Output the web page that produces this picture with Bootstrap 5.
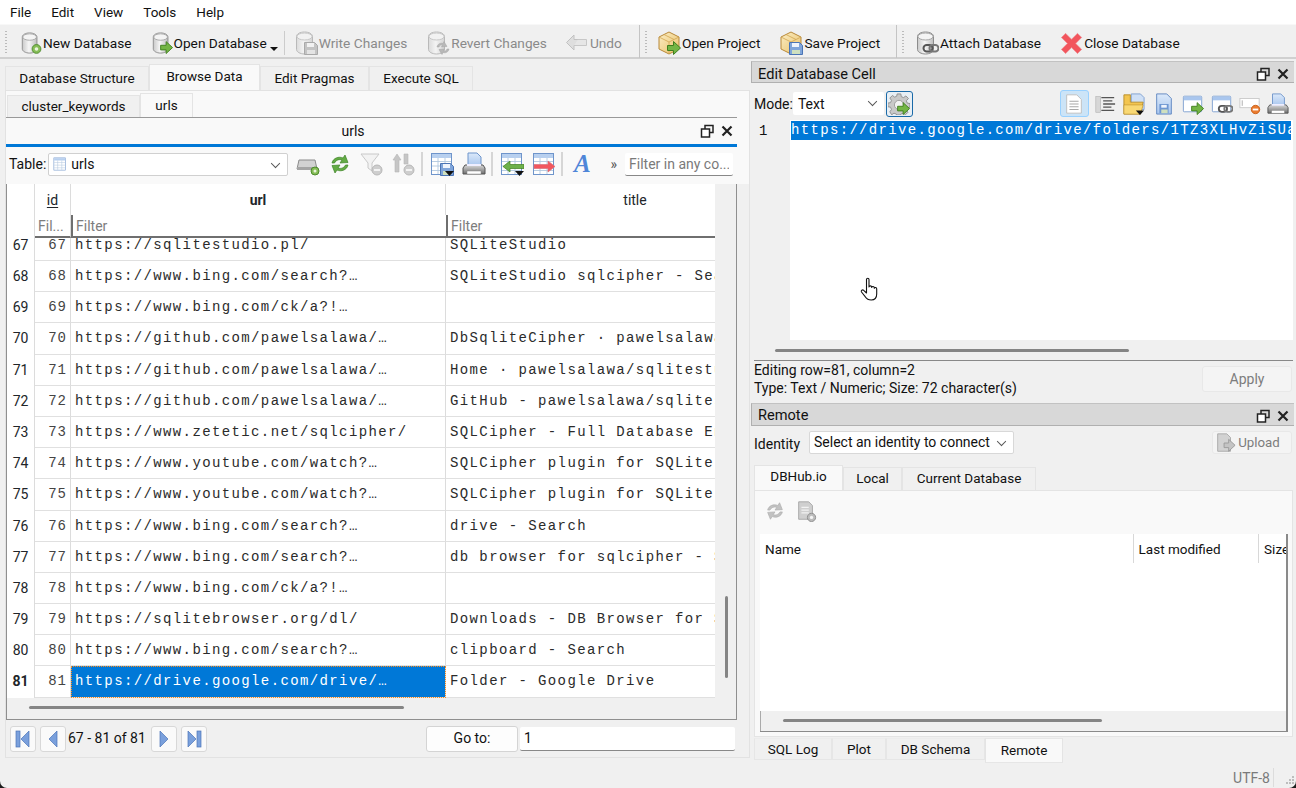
<!DOCTYPE html>
<html lang="en">
<head>
  <meta charset="UTF-8" />
  <meta name="viewport" content="width=device-width, initial-scale=1.0"/>
  <title>DB Browser for SQLite</title>
  <link href="https://cdn.jsdelivr.net/npm/bootstrap@5.3.0/dist/css/bootstrap.min.css" rel="stylesheet">
  <style>
    html, body { height: 100%; margin: 0; background: #1c1c1c; overflow: hidden; }
    body { font-family: Roboto, "Liberation Sans", sans-serif; font-size: 14px; color: #111; }
    .app-win { width: 1296px; height: 788px; background: #f0f0f0; border-radius: 0 0 7px 7px; overflow: hidden; position: relative; }
    .svg-defs { position: absolute; width: 0; height: 0; }
    .ico { width: 24px; height: 24px; flex: none; display: block; }
    .ico-off { filter: grayscale(1) opacity(.55); }
    .ico-db { width: 22px; }

    .menu-strip { height: 24px; background: #fff; padding-left: 10px; gap: 20px; line-height: 24px; font-size: 13.5px; }
    .tool-strip { height: 35px; border-top: 1px solid #f8f8f8; border-bottom: 2px solid #d0d0d0; font-size: 13.7px; }
    .tool-block { height: 33px; gap: 19px; padding: 3px 0 0 20px; position: relative; flex: none; }
    .tool-block::before { content: ""; position: absolute; left: 5px; top: 6px; bottom: 4px; width: 2px; background: repeating-linear-gradient(#bbb 0 1px, transparent 1px 3px); }
    .tool-one { width: 640px; border-right: 1px solid #c4c4c4; }
    .tool-two { width: 257px; padding-left: 17px; border-right: 1px solid #c4c4c4; }
    .tool-three { padding-left: 18px; gap: 20px; }
    .tool-btn { gap: 1px; white-space: nowrap; }
    .tool-off { color: #8a8a8a; }
    .undo-btn { margin-left: -1px; }
    .tool-caret { width: 0; height: 0; border: 4px solid transparent; border-top-color: #111; border-bottom: 0; margin: 12px 0 0 2px; }
    .tool-line { width: 1px; height: 24px; background: #ccc; margin: 0 -10px 0 -13px; }

    .work-area { height: 709px; }
    .left-side { width: 751px; padding: 5px 0 0 5px; flex: none; }
    .right-side { width: 545px; flex: none; padding-top: 2px; }

    .qt-tabs { border: 0; flex-wrap: nowrap; align-items: flex-end; font-size: 13.5px; }
    .qt-tabs .nav-link { border: 1px solid #e4e4e4; border-bottom: 0; border-radius: 0; background: #f0f0f0; color: #111; padding: 0; height: 24px; line-height: 23px; text-align: center; margin: 0; }
    .qt-tabs .nav-link.active { background: #f9f9f9; height: 26px; line-height: 22px; color: #111; border-color: #e4e4e4; }

    .left-pane { height: 668px; width: 745px; background: #f0f0f0; border: 1px solid #e2e2e2; }
    .pane-top { background: #f9f9f9; padding: 2px 0 0 0; }
    .sub-tabs { border-bottom: 1px solid #999; width: 731px; margin-left: 0; padding-left: 1px; }
    .sub-tabs .nav-link { height: 22px; line-height: 20px; }
    .sub-tabs .nav-link.active { height: 24px; line-height: 22px; }
    .dock-head { height: 26px; width: 731px; line-height: 26px; }
    .dock-name { width: 694px; text-align: center; }
    .dock-ctl { gap: 6px; align-items: center; }
    .ctl-mark { width: 14px; height: 14px; display: block; }
    .blue-rule { width: 731px; height: 3px; background: #0078d7; }
    .tbl-tools { height: 37px; width: 731px; padding: 0 0 3px 3px; }
    .tbl-tools .ico { margin-right: 8px; }
    .tool-sep { width: 2px; height: 24px; background: #d6d6d6; margin: 0 7px 0 -3px; flex: none; }
    .tbl-label { margin-right: 2px; }
    .table-mark { width: 14px; height: 14px; margin-right: 4px; }
    .italic-a { width: 24px; margin-right: -3px; text-align: center; font: italic 700 25px "Liberation Serif", serif; color: #4f86d8; line-height: 24px; }
    .qt-select { height: 23px; border: 1px solid #d0d0d0; border-radius: 2px; background: #fff; padding: 0 0 0 4px; line-height: 21px; position: relative; flex: none; white-space: nowrap; }
    .qt-select::after { content: ""; position: absolute; right: 8px; top: 6px; width: 7px; height: 7px; border-right: 1px solid #555; border-bottom: 1px solid #555; transform: rotate(45deg) scale(.95); }
    .qt-input { border: 0; border-bottom: 1px solid #888; border-radius: 2px; background: #fff; height: 23px; padding: 0 4px; font-size: 14px; color: #111; box-shadow: none; }
    .qt-input::placeholder { color: #7a7a7a; opacity: 1; }

    .data-box { width: 731px; height: 536px; border: 1px solid #8f8f8f; border-top: 0; background: #f0f0f0; }
    .data-main { height: 514px; }
    .data-left { width: 708px; flex: none; background: #fff; overflow: hidden; }
    .data-tbl { table-layout: fixed; width: 817px; margin: 0; border-collapse: separate; border-spacing: 0; background: #fff; }
    .data-tbl td, .data-tbl th { padding: 0; border: 0; border-bottom: 1px solid #e0e0e0; border-right: 1px solid #dcdcdc; background: #fff; box-shadow: none; white-space: nowrap; overflow: hidden; }
    .data-tbl .head-row th { height: 31px; padding-top: 2px; text-align: center; font-weight: 400; border-bottom: 0; line-height: 29px; }
    .data-tbl .head-row th.url-col { font-weight: 700; }
    .data-tbl .head-row th.end-col { border-right: 0; }
    .data-tbl .head-row u { text-underline-offset: 2px; }
    .data-tbl .filter-row th { height: 23px; padding-top: 1px; border-bottom: 2px solid #6f6f6f; font-weight: 400; line-height: 20px; color: #7d7d7d; }
    .data-tbl .filter-row th.fil-cell { padding-left: 3px; border-right: 0; border-left: 2px solid #6f6f6f; }
    .data-tbl .filter-row th.fil-id { padding-left: 3px; }
    .data-tbl .filter-row th.fil-none { border-bottom: 0; }
    .data-tbl .row-num { text-align: center; border-bottom: 0; border-right: 1px solid #dcdcdc; }
    .data-tbl tr.body-row td { height: 31.2px; line-height: 30px; }
    .data-tbl td.end-col { border-right: 0; }
    .mono-cell { font-family: "Liberation Mono", "Courier New", monospace; font-size: 14px; letter-spacing: 1.38px; color: #2b2b2b; padding-left: 4px !important; }
    .id-cell { text-align: right; padding-right: 3px !important; padding-left: 0 !important; letter-spacing: 1px; color: #444; }
    .cut-box { height: 22px; overflow: hidden; }
    .cut-box span { display: block; line-height: 30px; margin-top: -8px; }
    .data-tbl td.pick-cell { background: #0078d7; color: #fff; outline: 1px dotted #ff8c1a; outline-offset: -1px; }
    .side-scroll { flex: 1; position: relative; background: #f0f0f0; }
    .side-thumb { position: absolute; left: 10px; top: 412px; width: 3px; height: 82px; background: #858585; border-radius: 2px; }
    .base-scroll { height: 21px; padding: 8px 0 0 22px; }
    .base-thumb { height: 3px; background: #858585; border-radius: 2px; }

    .pager-row { height: 37px; width: 731px; padding-left: 4px; }
    .pager-btn { width: 26px; height: 26px; border: 1px solid #d8d8d8; border-radius: 3px; background: #fafafa; padding: 0; flex: none; }
    .pager-btn svg { width: 20px; height: 20px; display: block; margin: 2px; }
    .pager-text { margin: 0 5px 0 2px; }
    .goto-btn { width: 92px; height: 26px; border: 1px solid #d4d4d4; border-radius: 3px; background: #fdfdfd; font-size: 14px; padding: 0; color: #111; }
    .goto-input { width: 215px; height: 24px; margin: 0 2px 0 2px; }

    .dock-title { height: 22px; width: 543px; background: #d8d8d8; border: 1px solid #b0b0b0; border-top: 1px solid #c2c2c2; border-right: 0; padding: 4px 4px 0 6px; line-height: 16px; font-size: 14.6px; }
    .dock-low { height: 23px; padding-top: 2px; line-height: 19px; }
    .mode-row { height: 37px; padding: 7px 0 0 3px; align-items: flex-start !important; }
    .mode-row > span { line-height: 28px; }
    .mode-select { width: 91px; margin-top: 2px; border: 0; padding-left: 5px; line-height: 24px; }
    .gear-btn { width: 27px; height: 26px; border: 1px solid #1a6aa8; border-radius: 3px; background: #e8eff5; margin: 1px 0 0 2px; }
    .doc-btn { width: 29px; height: 27px; background: #cce4f7; border: 1px solid #99d1ff; border-radius: 3px; margin-left: 147px; }
    .cell-tools .ico { width: 22px; height: 22px; }
    .cell-tools > .ico { margin-top: 3px; }
    .edit-area { height: 220px; width: 539px; margin-left: 3px; background: #fff; }
    .gutter { width: 36px; background: #f0f0f0; padding: 1px 0 0 5px; line-height: 20px; flex: none; font-family: "Liberation Mono", monospace; }
    .edit-text { font-family: "Liberation Mono", "Courier New", monospace; font-size: 14px; letter-spacing: 1.33px; background: #0078d7; color: #fff; height: 19px; line-height: 18px; width: 500px; margin: 1px 0 0 1px; overflow: hidden; white-space: nowrap; }
    .edit-base { height: 21px; width: 539px; margin-left: 3px; border-bottom: 1px solid #888; padding: 9px 0 0 21px; }
    .stat-row { height: 42px; padding: 0 4px 0 3px; }
    .stat-text { line-height: 18px; }
    .off-btn { border: 1px solid #e8e8e8; border-radius: 3px; background: #f4f4f4; color: #7d7d7d; font-size: 14px; padding: 0; }
    .apply-btn { width: 90px; height: 26px; margin-top: 5px; }
    .ident-row { height: 39px; padding: 5px 4px 0 3px; align-items: flex-start !important; }
    .ident-label { line-height: 24px; margin: 1px 9px 0 0; }
    .ident-select { width: 205px; padding-right: 24px; border-color: #d8d8d8; }
    .upload-btn { width: 80px; height: 23px; gap: 2px; font-size: 13.3px; padding-right: 10px; }
    .upload-btn svg { width: 22px; height: 22px; }
    .rem-tabs { padding-left: 3px; height: 25px; }
    .rem-tabs .nav-link { height: 23px; line-height: 20px; }
    .rem-tabs .nav-link.active { height: 25px; line-height: 21px; }
    .rem-pane { height: 247px; width: 539px; margin-left: 3px; background: #f9f9f9; border: 1px solid #e4e4e4; padding: 9px 5px 0 5px; }
    .rem-icons { height: 34px; padding-left: 4px; gap: 9px; }
    .rem-icons .ico { width: 22px; height: 22px; }
    .rem-table { height: 198px; width: 528px; background: #fff; border-right: 2px solid #8a8a8a; border-bottom: 1px solid #8a8a8a; overflow: hidden; }
    .rem-head { height: 29px; font-size: 13.5px; }
    .rem-head > div { padding: 1px 0 0 5px; line-height: 28px; white-space: nowrap; overflow: hidden; }
    .rem-head .head-cell { border-right: 1px solid #d8d8d8; }
    .rem-body { height: 148px; }
    .rem-base { height: 20px; background: #f0f0f0; padding: 8px 0 0 22px; border-left: 1px solid #aaa; }
    .low-tabs { padding: 1px 0 0 3px; }
    .low-tabs .nav-link { height: 22px; line-height: 20px; border: 1px solid #e6e6e6; border-top: 1px solid #ececec; }
    .low-tabs .nav-link.active { height: 25px; line-height: 23px; border-top: 1px solid #e6e6e6; border-bottom: 1px solid #e6e6e6; }
    .qt-tabs.low-tabs { align-items: flex-start; }

    .status-strip { height: 20px; padding-right: 22px; color: #7a7a7a; line-height: 20px; position: relative; }
    .status-sep { width: 1px; height: 19px; background: #dcdcdc; margin-left: 3px; }
    .grip-mark { position: absolute; right: 1px; bottom: 1px; width: 12px; height: 12px; }
    .hand-cur { position: absolute; left: 860px; top: 277px; width: 20px; height: 25px; }
  </style>
</head>
<body>
  <svg class="svg-defs" xmlns="http://www.w3.org/2000/svg">
    <defs>
      <linearGradient id="gDb" x1="0" x2="1" y1="0" y2="0"><stop offset="0" stop-color="#c9c9c9"/><stop offset=".45" stop-color="#f6f6f6"/><stop offset="1" stop-color="#bdbdbd"/></linearGradient>
      <linearGradient id="gBlue" x1="0" x2="0" y1="0" y2="1"><stop offset="0" stop-color="#dbe9fa"/><stop offset="1" stop-color="#a9c6ee"/></linearGradient>
      <linearGradient id="gBox" x1="0" x2="1" y1="0" y2="1"><stop offset="0" stop-color="#fbeec6"/><stop offset="1" stop-color="#e9c067"/></linearGradient>
      <linearGradient id="gPrint" x1="0" x2="0" y1="0" y2="1"><stop offset="0" stop-color="#d9d9d9"/><stop offset="1" stop-color="#6d6d6d"/></linearGradient>
    </defs>
    <symbol id="p-db" viewBox="0 0 24 24"><path d="M2.500 5.500c0-2.600 3.600-4.500 8-4.500s8 1.900 8 4.500v13c0 2.400-3.600 4.500-8 4.500s-8-2.100-8-4.500z" fill="url(#gDb)" stroke="#8c8c8c"/><ellipse cx="10.500" cy="5.500" rx="7.500" ry="3.500" fill="#f4f4f4" stroke="#a5a5a5"/></symbol>
    <symbol id="p-plus" viewBox="0 0 24 24"><circle cx="18" cy="18.500" r="4.800" fill="#86bd57" stroke="#4d8b2c"/><circle cx="18" cy="18.500" r="2" fill="#eaf5dd"/></symbol>
    <symbol id="p-arrow" viewBox="0 0 24 24"><path d="M10.500 14.500h6v-4l7 6.500-7 6.500v-4h-6z" fill="#73b544" stroke="#3f7f1e"/></symbol>
    <symbol id="p-floppy" viewBox="0 0 24 24"><path d="M10.500 11.500h10l3 3v9h-13z" fill="#7fa5da" stroke="#4a74b5"/><rect x="13" y="12" width="7" height="4" fill="#eef4fc"/><rect x="13" y="19" width="8" height="4" fill="#cfe0bf"/></symbol>
    <symbol id="p-cycle" viewBox="0 0 24 24"><path d="M11 16c.5-3 3.500-4.500 6-3.500l1-2 3 5-5.500.5 1-2c-1.500-.5-3 .3-3.500 2zM23 18c-.5 3-3.500 4.500-6 3.500l-1 2-3-5 5.500-.5-1 2c1.500.5 3-.3 3.500-2z" fill="#8a8a8a" stroke="#666" stroke-width=".5"/></symbol>
    <symbol id="p-chain" viewBox="0 0 24 24"><rect x="8.500" y="14" width="9" height="6.500" rx="3.200" fill="none" stroke="#555" stroke-width="2"/><rect x="14.500" y="14" width="9" height="6.500" rx="3.200" fill="none" stroke="#777" stroke-width="2"/></symbol>
    <symbol id="p-box" viewBox="0 0 24 24"><path d="M12 1l10 5v12l-10 5-10-5V6z" fill="url(#gBox)" stroke="#b8893a"/><path d="M2 6l10 5 10-5M12 11v12M7 3.500l10 5" fill="none" stroke="#d0a550" stroke-width=".8"/></symbol>
    <symbol id="p-cross" viewBox="0 0 24 24"><path d="M5 1.500l6.500 6.500 6.500-6.500 4.500 4.500-6.500 6.500 6.500 6.500-4.500 4.500-6.500-6.500-6.500 6.500-4.500-4.500 6.500-6.500-6.500-6.500z" fill="#f2555d" stroke="#ef8a8e"/></symbol>
    <symbol id="p-undo" viewBox="0 0 24 24"><path d="M9 4L1.500 11.500 9 19v-4.500h6V8.500H9z" fill="#cfcfcf" stroke="#9b9b9b"/><path d="M13 8.500h8.500v6H9" fill="#dedede" stroke="#a5a5a5"/></symbol>
    <symbol id="p-addtbl" viewBox="0 0 24 24"><path d="M3 8h16l2 9H1z" fill="#d2d2d2" stroke="#8a8a8a"/><rect x="1" y="15" width="20" height="3" fill="#a5a5a5"/><circle cx="19" cy="19" r="4" fill="#86bd57" stroke="#4d8b2c"/><circle cx="19" cy="19" r="1.500" fill="#eaf5dd"/></symbol>
    <symbol id="p-refresh" viewBox="0 0 24 24"><path d="M4 11c1-5 7-7 11-5l2-3 3 7.500-8 .5 2-3c-3-1-6 0-7.500 3zM20 13c-1 5-7 7-11 5l-2 3-3-7.500 8-.5-2 3c3 1 6 0 7.500-3z" fill="#63ab44" stroke="#3d8427" stroke-width=".7"/></symbol>
    <symbol id="p-funnel" viewBox="0 0 24 24"><path d="M1 2h18l-7 9v8l-4-3v-5z" fill="#ededed" stroke="#a0a0a0"/><circle cx="17" cy="18" r="5" fill="#aaa" stroke="#808080"/><rect x="14" y="17" width="6" height="2" fill="#eee"/></symbol>
    <symbol id="p-sortoff" viewBox="0 0 24 24"><path d="M5 2l4 6H7v12H3V8H1z" fill="#9d9d9d" stroke="#7d7d7d" stroke-width=".6"/><path d="M12 2h4v10h-4z" fill="#9d9d9d" stroke="#7d7d7d" stroke-width=".6"/><circle cx="17" cy="18" r="5" fill="#aaa" stroke="#808080"/><rect x="14" y="17" width="6" height="2" fill="#eee"/></symbol>
    <symbol id="p-grid" viewBox="0 0 24 24"><rect x="1.500" y="1.500" width="20" height="21" fill="#fff" stroke="#6f95cb"/><rect x="2" y="2" width="19" height="4" fill="#b8d0ef"/><path d="M2 9.500h19M2 14h19M2 18.500h19M8 6v16M15 6v16" stroke="#b2c8df" stroke-width=".9"/></symbol>
    <symbol id="p-caret" viewBox="0 0 24 24"><path d="M15 19h9l-4.500 5z" fill="#111"/></symbol>
    <symbol id="p-green-left" viewBox="0 0 24 24"><path d="M24 12.500H10V9L3 14.500 10 20v-3.500h14z" fill="#6db14a" stroke="#3f7f1e" stroke-width=".7"/></symbol>
    <symbol id="p-red-right" viewBox="0 0 24 24"><path d="M2 12.500h14V9l7 5.500-7 5.500v-3.500H2z" fill="#f2575e" stroke="#d8737a" stroke-width=".7"/></symbol>
    <symbol id="p-print" viewBox="0 0 24 24"><path d="M6 1h9l4 4v9H6z" fill="url(#gBlue)" stroke="#6f95cb"/><path d="M3 13h18l2 3v6H1v-6z" fill="url(#gPrint)" stroke="#555"/><rect x="5" y="12" width="14" height="2" fill="#eef"/><rect x="5" y="19" width="14" height="3" fill="#fff" stroke="#888" stroke-width=".5"/></symbol>
    <symbol id="p-doc" viewBox="0 0 24 24"><path d="M4 2h11l5 5v15H4z" fill="#fff" stroke="#bdbdbd"/><path d="M7 9h10M7 12h10M7 15h10M7 18h10" stroke="#a8a8a8" stroke-width="1.300"/></symbol>
    <symbol id="p-docgrey" viewBox="0 0 24 24"><path d="M4 2h11l4 4v15H4z" fill="#cfcfcf" stroke="#a5a5a5"/><path d="M7 8h8M7 11h8M7 14h8" stroke="#f2f2f2" stroke-width="1.200"/><circle cx="18" cy="19" r="4.500" fill="#bcbcbc" stroke="#8d8d8d"/><circle cx="18" cy="19" r="1.800" fill="#f4f4f4"/></symbol>
    <symbol id="p-indent" viewBox="0 0 24 24"><rect x="2" y="4" width="5" height="17" fill="#d7d7d7" stroke="#aaa" stroke-width=".6"/><path d="M8 5h14M10 8.500h10M10 12h13M10 15.500h9M8 19h14" stroke="#555" stroke-width="1.400"/></symbol>
    <symbol id="p-folder" viewBox="0 0 24 24"><path d="M9 1h10l4 4v13H9z" fill="#cfe0f6" stroke="#7d9fd0"/><path d="M1 2h7v8h14l-3 13H1z" fill="#f3c54f" stroke="#b88c28"/><path d="M1 13h21l-3 10H1z" fill="#f9d873" stroke="#b88c28" stroke-width=".6"/><path d="M14 19h9l-4.500 5z" fill="#111"/></symbol>
    <symbol id="p-savedoc" viewBox="0 0 24 24"><path d="M4 1h11l5 5v17H4z" fill="url(#gBlue)" stroke="#5d84bf"/><path d="M7 12h10v10H7z" fill="#6d97d3"/><rect x="9" y="13" width="6" height="3" fill="#eef4fc"/><rect x="9" y="18" width="7" height="4" fill="#cfe0bf"/></symbol>
    <symbol id="p-window" viewBox="0 0 24 24"><rect x="1.500" y="3.500" width="20" height="17" rx="1" fill="#fff" stroke="#7d9fd0"/><rect x="2" y="4" width="19" height="4" fill="#a9c6ee"/></symbol>
    <symbol id="p-null" viewBox="0 0 24 24"><rect x="1" y="6" width="21" height="10" fill="#fff" stroke="#c9c9c9"/><rect x="3" y="8" width="1" height="6" fill="#aaa"/><circle cx="18" cy="18" r="4.600" fill="#ea7b2e" stroke="#c85f18"/><rect x="15" y="17" width="6" height="2" fill="#fff"/></symbol>
    <symbol id="p-gear" viewBox="0 0 24 24"><path d="M10 1h4l.5 3 2.500 1 2.500-1.800 2.800 2.800L20 8.500l1 2.500 3 .5v4l-3 .5-1 2.500 1.800 2.500-2.800 2.800-2.500-1.800-2.500 1-.5 1h-4l-.5-1-2.500-1-2.500 1.800L2 20.500 3.800 18l-1-2.500-3-.5v-4l3-.5 1-2.500L2 5.500 4.800 2.700 7.300 4.500l2.200-1z" fill="#c9c9c9" stroke="#8d8d8d"/><circle cx="12" cy="13" r="5" fill="#f2f2f2" stroke="#999"/></symbol>
    <symbol id="p-first" viewBox="0 0 20 20"><rect x="3" y="2" width="4" height="16" fill="#7aa0dc" stroke="#4c74b8" stroke-width=".7"/><path d="M16 2v16L8 10z" fill="#7aa0dc" stroke="#4c74b8" stroke-width=".7"/></symbol>
    <symbol id="p-prev" viewBox="0 0 20 20"><path d="M14 2v16L6 10z" fill="#7aa0dc" stroke="#4c74b8" stroke-width=".7"/></symbol>
    <symbol id="p-next" viewBox="0 0 20 20"><path d="M6 2v16l8-8z" fill="#7aa0dc" stroke="#4c74b8" stroke-width=".7"/></symbol>
    <symbol id="p-last" viewBox="0 0 20 20"><path d="M4 2v16l8-8z" fill="#7aa0dc" stroke="#4c74b8" stroke-width=".7"/><rect x="13" y="2" width="4" height="16" fill="#7aa0dc" stroke="#4c74b8" stroke-width=".7"/></symbol>
    <symbol id="p-float" viewBox="0 0 14 14"><rect x="5" y="1.500" width="8" height="7" fill="none" stroke="#222" stroke-width="1.500"/><rect x="1.500" y="5" width="8" height="8" fill="#fff" stroke="#222" stroke-width="1.500"/></symbol>
    <symbol id="p-close" viewBox="0 0 14 14"><path d="M2.500 2.500l9 9M11.500 2.500l-9 9" stroke="#222" stroke-width="2.200"/></symbol>
    <symbol id="p-upload" viewBox="0 0 24 24"><path d="M4 2h10l4 4v15H4z" fill="#d2d2d2" stroke="#aaa"/><path d="M11 12h5V8l7 6.500-7 6.500v-4h-5z" fill="#c4c4c4" stroke="#999"/></symbol>
  </svg>

  <div class="app-win d-flex flex-column">
    <div class="menu-strip d-flex">
      <span>File</span><span>Edit</span><span>View</span><span>Tools</span><span>Help</span>
    </div>

    <div class="tool-strip d-flex">
      <div class="tool-block tool-one d-flex align-items-center">
        <div class="tool-btn d-flex align-items-center"><svg class="ico ico-db"><use href="#p-db"/><use href="#p-plus"/></svg>New Database</div>
        <div class="tool-btn d-flex align-items-center"><svg class="ico ico-db"><use href="#p-db"/><use href="#p-arrow"/></svg>Open Database<span class="tool-caret"></span></div>
        <span class="tool-line"></span>
        <div class="tool-btn tool-off d-flex align-items-center"><svg class="ico ico-off"><use href="#p-db"/><use href="#p-floppy"/></svg>Write Changes</div>
        <div class="tool-btn tool-off d-flex align-items-center"><svg class="ico ico-off"><use href="#p-db"/><use href="#p-cycle"/></svg>Revert Changes</div>
        <div class="tool-btn tool-off undo-btn d-flex align-items-center"><svg class="ico ico-off"><use href="#p-undo"/></svg>Undo</div>
      </div>
      <div class="tool-block tool-two d-flex align-items-center">
        <div class="tool-btn d-flex align-items-center"><svg class="ico"><use href="#p-box"/><use href="#p-arrow"/></svg>Open Project</div>
        <div class="tool-btn d-flex align-items-center"><svg class="ico"><use href="#p-box"/><use href="#p-floppy"/></svg>Save Project</div>
      </div>
      <div class="tool-block tool-three d-flex align-items-center">
        <div class="tool-btn d-flex align-items-center"><svg class="ico"><use href="#p-db"/><use href="#p-chain"/></svg>Attach Database</div>
        <div class="tool-btn d-flex align-items-center"><svg class="ico ico-db"><use href="#p-cross"/></svg>Close Database</div>
      </div>
    </div>

    <div class="work-area d-flex">
      <div class="left-side">
        <ul class="nav qt-tabs">
          <li class="nav-item"><a class="nav-link" style="width:144px" href="#">Database Structure</a></li>
          <li class="nav-item"><a class="nav-link active" style="width:111px" href="#">Browse Data</a></li>
          <li class="nav-item"><a class="nav-link" style="width:109px" href="#">Edit Pragmas</a></li>
          <li class="nav-item"><a class="nav-link" style="width:104px" href="#">Execute SQL</a></li>
        </ul>
        <div class="left-pane">
          <div class="pane-top">
            <ul class="nav qt-tabs sub-tabs">
              <li class="nav-item"><a class="nav-link" style="width:133px" href="#">cluster_keywords</a></li>
              <li class="nav-item"><a class="nav-link active" style="width:53px" href="#">urls</a></li>
            </ul>
            <div class="dock-head d-flex">
              <div class="dock-name">urls</div>
              <div class="dock-ctl d-flex">
                <svg class="ctl-mark"><use href="#p-float"/></svg>
                <svg class="ctl-mark"><use href="#p-close"/></svg>
              </div>
            </div>
            <div class="blue-rule"></div>
            <div class="tbl-tools d-flex align-items-center">
              <span class="tbl-label">Table:</span>
              <div class="qt-select d-flex align-items-center" style="width:240px"><svg class="table-mark"><use href="#p-grid"/></svg>urls</div>
              <svg class="ico ms-2"><use href="#p-addtbl"/></svg>
              <svg class="ico"><use href="#p-refresh"/></svg>
              <svg class="ico ico-off"><use href="#p-funnel"/></svg>
              <svg class="ico ico-off"><use href="#p-sortoff"/></svg>
              <span class="tool-sep"></span>
              <svg class="ico"><use href="#p-grid"/><use href="#p-floppy"/><use href="#p-caret"/></svg>
              <svg class="ico"><use href="#p-print"/></svg>
              <span class="tool-sep"></span>
              <svg class="ico"><use href="#p-grid"/><use href="#p-green-left"/><use href="#p-caret"/></svg>
              <svg class="ico"><use href="#p-grid"/><use href="#p-red-right"/></svg>
              <span class="tool-sep"></span>
              <span class="italic-a">A</span>
              <span class="ms-auto me-2" style="color:#555">»</span>
              <input class="qt-input me-1" style="width:108px" placeholder="Filter in any co...">
            </div>
          </div>

          <div class="data-box">
            <div class="data-main d-flex">
              <div class="data-left">
                <table class="table data-tbl">
                  <colgroup><col style="width:28px"><col style="width:36px"><col style="width:375px"><col style="width:378px"></colgroup>
                  <thead>
                    <tr class="head-row"><th></th><th><u>id</u></th><th class="url-col">url</th><th class="end-col">title</th></tr>
                    <tr class="filter-row"><th class="fil-none"></th><th class="fil-id">Fil...</th><th class="fil-cell">Filter</th><th class="fil-cell">Filter</th></tr>
                  </thead>
                  <tbody id="urlRows"></tbody>
                </table>
              </div>
              <div class="side-scroll"><div class="side-thumb"></div></div>
            </div>
            <div class="base-scroll"><div class="base-thumb" style="width:375px"></div></div>
          </div>

          <div class="pager-row d-flex align-items-center">
            <button class="pager-btn"><svg><use href="#p-first"/></svg></button>
            <button class="pager-btn ms-1"><svg><use href="#p-prev"/></svg></button>
            <span class="pager-text">67 - 81 of 81</span>
            <button class="pager-btn"><svg><use href="#p-next"/></svg></button>
            <button class="pager-btn ms-1"><svg><use href="#p-last"/></svg></button>
            <button class="goto-btn ms-auto">Go to:</button>
            <input class="qt-input goto-input" value="1">
          </div>
        </div>
      </div>

      <div class="right-side">
        <div class="dock-title d-flex justify-content-between">
          <span>Edit Database Cell</span>
          <span class="dock-ctl d-flex"><svg class="ctl-mark"><use href="#p-float"/></svg><svg class="ctl-mark"><use href="#p-close"/></svg></span>
        </div>
        <div class="mode-row cell-tools d-flex align-items-center">
          <span>Mode:</span>
          <div class="qt-select mode-select">Text</div>
          <div class="gear-btn d-flex align-items-center justify-content-center"><svg class="ico"><use href="#p-gear"/><use href="#p-arrow"/></svg></div>
          <div class="doc-btn d-flex align-items-center justify-content-center"><svg class="ico"><use href="#p-doc"/></svg></div>
          <svg class="ico" style="margin-left:5px"><use href="#p-indent"/></svg>
          <svg class="ico" style="margin-left:7px"><use href="#p-folder"/></svg>
          <svg class="ico" style="margin-left:8px"><use href="#p-savedoc"/></svg>
          <svg class="ico" style="margin-left:7px"><use href="#p-window"/><use href="#p-arrow"/></svg>
          <svg class="ico" style="margin-left:7px"><use href="#p-window"/><use href="#p-chain"/></svg>
          <svg class="ico" style="margin-left:6px"><use href="#p-null"/></svg>
          <svg class="ico" style="margin-left:6px"><use href="#p-print"/></svg>
        </div>
        <div class="edit-area d-flex">
          <div class="gutter">1</div>
          <div class="edit-text">https://drive.google.com/drive/folders/1TZ3XLHvZiSUa</div>
        </div>
        <div class="edit-base"><div class="base-thumb" style="width:354px"></div></div>
        <div class="stat-row d-flex justify-content-between align-items-start">
          <div class="stat-text">Editing row=81, column=2<br>Type: Text / Numeric; Size: 72 character(s)</div>
          <button class="off-btn apply-btn">Apply</button>
        </div>
        <div class="dock-title dock-low d-flex justify-content-between">
          <span>Remote</span>
          <span class="dock-ctl d-flex"><svg class="ctl-mark"><use href="#p-float"/></svg><svg class="ctl-mark"><use href="#p-close"/></svg></span>
        </div>
        <div class="ident-row d-flex align-items-center">
          <span class="ident-label">Identity</span>
          <div class="qt-select ident-select">Select an identity to connect</div>
          <button class="off-btn upload-btn ms-auto d-flex align-items-center justify-content-center"><svg><use href="#p-upload"/></svg>Upload</button>
        </div>
        <ul class="nav qt-tabs rem-tabs">
          <li class="nav-item"><a class="nav-link active" style="width:89px" href="#">DBHub.io</a></li>
          <li class="nav-item"><a class="nav-link" style="width:59px" href="#">Local</a></li>
          <li class="nav-item"><a class="nav-link" style="width:134px" href="#">Current Database</a></li>
        </ul>
        <div class="rem-pane">
          <div class="rem-icons d-flex">
            <svg class="ico ico-off"><use href="#p-refresh"/></svg>
            <svg class="ico"><use href="#p-docgrey"/></svg>
          </div>
          <div class="rem-table">
            <div class="rem-head d-flex">
              <div class="head-cell" style="width:375px">Name</div>
              <div class="head-cell" style="width:126px">Last modified</div>
              <div style="width:27px">Size</div>
            </div>
            <div class="rem-body"></div>
            <div class="rem-base"><div class="base-thumb" style="width:319px"></div></div>
          </div>
        </div>
        <ul class="nav qt-tabs low-tabs">
          <li class="nav-item"><a class="nav-link" style="width:78px" href="#">SQL Log</a></li>
          <li class="nav-item"><a class="nav-link" style="width:54px" href="#">Plot</a></li>
          <li class="nav-item"><a class="nav-link" style="width:99px" href="#">DB Schema</a></li>
          <li class="nav-item"><a class="nav-link active" style="width:78px" href="#">Remote</a></li>
        </ul>
      </div>
    </div>

    <div class="status-strip d-flex justify-content-end">
      <span>UTF-8</span><span class="status-sep"></span>
      <svg class="grip-mark" viewBox="0 0 12 12"><g fill="#bdbdbd"><rect x="9" y="1" width="2" height="2"/><rect x="6" y="4" width="2" height="2"/><rect x="9" y="4" width="2" height="2"/><rect x="3" y="7" width="2" height="2"/><rect x="6" y="7" width="2" height="2"/><rect x="9" y="7" width="2" height="2"/></g></svg>
    </div>

    <svg class="hand-cur" viewBox="0 0 20 25"><path d="M6.500 2.500c0-1.600 2.500-1.600 2.500 0V10c.2-1.500 2.600-1.500 2.700 0v.5c.2-1.300 2.500-1.300 2.600.2v.6c.3-1.100 2.300-1 2.400.4v5.300c0 3.500-2 6-5.500 6-3 0-4.500-1-6-3.300L1.500 15c-.9-1.500 1-2.800 2.200-1.600l2.800 2.600z" fill="#fff" stroke="#111" stroke-width="1.100" stroke-linejoin="round"/></svg>
  </div>

  <script src="https://cdn.jsdelivr.net/npm/bootstrap@5.3.0/dist/js/bootstrap.bundle.min.js"></script>
  <script>
    const urlRows = document.getElementById('urlRows');
    const bing = 'https://www.bing.com/search?…';
    const binCk = 'https://www.bing.com/ck/a?!…';
    const gh = 'https://github.com/pawelsalawa/…';
    const yt = 'https://www.youtube.com/watch?…';

    const rows = [
      [67, 'https://sqlitestudio.pl/', 'SQLiteStudio'],
      [68, bing, 'SQLiteStudio sqlcipher - Search'],
      [69, binCk, ''],
      [70, gh, 'DbSqliteCipher · pawelsalawa/sqlitestudio'],
      [71, gh, 'Home · pawelsalawa/sqlitestudio'],
      [72, gh, 'GitHub - pawelsalawa/sqlitestudio'],
      [73, 'https://www.zetetic.net/sqlcipher/', 'SQLCipher - Full Database Encryption'],
      [74, yt, 'SQLCipher plugin for SQLite'],
      [75, yt, 'SQLCipher plugin for SQLite'],
      [76, bing, 'drive - Search'],
      [77, bing, 'db browser for sqlcipher - Search'],
      [78, binCk, ''],
      [79, 'https://sqlitebrowser.org/dl/', 'Downloads - DB Browser for SQLite'],
      [80, bing, 'clipboard - Search'],
      [81, 'https://drive.google.com/drive/…', 'Folder - Google Drive']
    ];

    // first row is scrolled partly out of view
    rows.forEach((r, i) => {
      const tr = document.createElement('tr');
      const wrap = t => i === 0 ? `<div class="cut-box"><span>${t}</span></div>` : t;
      tr.className = i === 0 ? 'cut-row' : 'body-row';
      const last = r[0] === 81;
      tr.innerHTML = `<td class="row-num${last ? ' fw-bold' : ''}">${wrap(r[0])}</td>` +
        `<td class="mono-cell id-cell">${wrap(r[0])}</td>` +
        `<td class="mono-cell${last ? ' pick-cell' : ''}">${wrap(r[1])}</td>` +
        `<td class="mono-cell end-col">${wrap(r[2])}</td>`;
      urlRows.appendChild(tr);
    });
  </script>
</body>
</html>
